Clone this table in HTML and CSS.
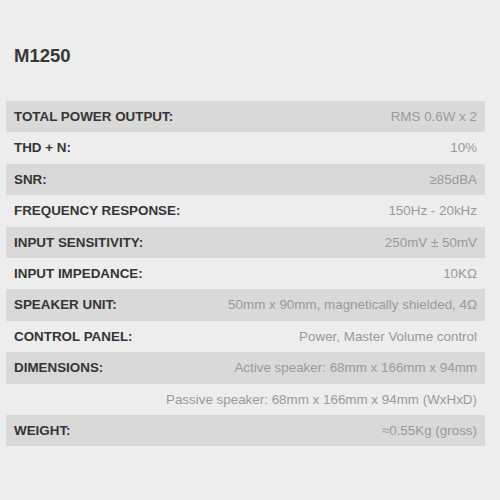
FILE: index.html
```html
<!DOCTYPE html>
<html>
<head>
<meta charset="utf-8">
<link rel="stylesheet" href="styles.css">
</head>
<body>
<div class="page">
  <h1 class="title">M1250</h1>
  <div class="specs">
    <div class="row alt"><span class="label">TOTAL POWER OUTPUT:</span><span class="value">RMS 0.6W x 2</span></div>
    <div class="row"><span class="label">THD + N:</span><span class="value">10%</span></div>
    <div class="row alt"><span class="label">SNR:</span><span class="value">≥85dBA</span></div>
    <div class="row"><span class="label">FREQUENCY RESPONSE:</span><span class="value">150Hz - 20kHz</span></div>
    <div class="row alt"><span class="label">INPUT SENSITIVITY:</span><span class="value">250mV ± 50mV</span></div>
    <div class="row"><span class="label">INPUT IMPEDANCE:</span><span class="value">10KΩ</span></div>
    <div class="row alt"><span class="label">SPEAKER UNIT:</span><span class="value">50mm x 90mm, magnetically shielded, 4Ω</span></div>
    <div class="row"><span class="label">CONTROL PANEL:</span><span class="value">Power, Master Volume control</span></div>
    <div class="row alt"><span class="label">DIMENSIONS:</span><span class="value">Active speaker: 68mm x 166mm x 94mm</span></div>
    <div class="row"><span class="label"></span><span class="value">Passive speaker: 68mm x 166mm x 94mm (WxHxD)</span></div>
    <div class="row alt"><span class="label">WEIGHT:</span><span class="value">≈0.55Kg (gross)</span></div>
  </div>
</div>
</body>
</html>
```
FILE: styles.css
```css
html, body {
  margin: 0;
  padding: 0;
  background: #ededed;
}
body {
  font-family: "Liberation Sans", Arial, sans-serif;
  width: 500px;
  height: 500px;
  overflow: hidden;
}
.page {
  padding: 45px 15px 0 6px;
}
.title {
  margin: 0 0 34px 8px;
  font-size: 18.5px;
  line-height: 22px;
  font-weight: bold;
  color: #383838;
}
.specs {
  display: flex;
  flex-direction: column;
}
.row {
  display: flex;
  justify-content: space-between;
  height: 31.4px;
  line-height: 31.4px;
  padding: 0 8px;
  font-size: 13.4px;
}
.row.alt {
  background: #d9d9d9;
}
.label {
  font-weight: bold;
  color: #353535;
}
.value {
  color: #999999;
}
```
